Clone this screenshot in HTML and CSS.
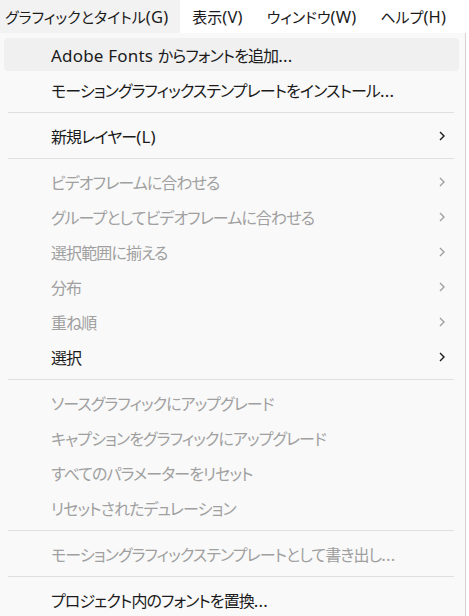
FILE: index.html
```html
<!DOCTYPE html>
<html lang="ja">
<head>
<meta charset="utf-8">
<link rel="stylesheet" href="styles.css">
</head>
<body>
<div class="menubar">
  <div class="mb-item active">グラフィックとタイトル<span class="lat">(G)</span></div>
  <div class="mb-item">表示<span class="lat">(V)</span></div>
  <div class="mb-item">ウィンドウ<span class="lat">(W)</span></div>
  <div class="mb-item">ヘルプ<span class="lat">(H)</span></div>
</div>
<div class="dropdown">
  <div class="item hover"><span class="label"><span class="lat">Adobe Fonts </span>からフォントを追加<span class="lat">...</span></span></div>
  <div class="item"><span class="label">モーショングラフィックステンプレートをインストール<span class="lat">...</span></span></div>
  <div class="sep"></div>
  <div class="item"><span class="label">新規レイヤー<span class="lat">(L)</span></span><svg class="chev" viewBox="0 0 6 10"><path d="M1 1 L5 5 L1 9"/></svg></div>
  <div class="sep"></div>
  <div class="item disabled"><span class="label">ビデオフレームに合わせる</span><svg class="chev" viewBox="0 0 6 10"><path d="M1 1 L5 5 L1 9"/></svg></div>
  <div class="item disabled"><span class="label">グループとしてビデオフレームに合わせる</span><svg class="chev" viewBox="0 0 6 10"><path d="M1 1 L5 5 L1 9"/></svg></div>
  <div class="item disabled"><span class="label">選択範囲に揃える</span><svg class="chev" viewBox="0 0 6 10"><path d="M1 1 L5 5 L1 9"/></svg></div>
  <div class="item disabled"><span class="label">分布</span><svg class="chev" viewBox="0 0 6 10"><path d="M1 1 L5 5 L1 9"/></svg></div>
  <div class="item disabled"><span class="label">重ね順</span><svg class="chev" viewBox="0 0 6 10"><path d="M1 1 L5 5 L1 9"/></svg></div>
  <div class="item"><span class="label">選択</span><svg class="chev" viewBox="0 0 6 10"><path d="M1 1 L5 5 L1 9"/></svg></div>
  <div class="sep"></div>
  <div class="item disabled"><span class="label">ソースグラフィックにアップグレード</span></div>
  <div class="item disabled"><span class="label">キャプションをグラフィックにアップグレード</span></div>
  <div class="item disabled"><span class="label">すべてのパラメーターをリセット</span></div>
  <div class="item disabled"><span class="label">リセットされたデュレーション</span></div>
  <div class="sep"></div>
  <div class="item disabled"><span class="label">モーショングラフィックステンプレートとして書き出し<span class="lat">...</span></span></div>
  <div class="sep"></div>
  <div class="item"><span class="label">プロジェクト内のフォントを置換<span class="lat">...</span></span></div>
</div>
</body>
</html>
```

FILE: styles.css
```css
html, body {
  margin: 0;
  padding: 0;
  background: #ffffff;
  overflow: hidden;
}
body {
  width: 469px;
  height: 616px;
  font-family: "Noto Sans", "Noto Sans CJK JP", sans-serif;
  color: #1b1b1b;
  font-feature-settings: "palt";
}
.menubar {
  display: flex;
  height: 33px;
  background: #ffffff;
  font-size: 15px;
}
.menubar .lat {
  font-size: 16.5px;
  letter-spacing: 0.2px;
}
.mb-item {
  display: flex;
  align-items: center;
  padding: 0 12px;
  height: 33px;
  white-space: nowrap;
}
.mb-item.active {
  background: #f2f2f2;
  padding-left: 5px;
}
.dropdown {
  width: 466px;
  height: 583px;
  background: #f9f9f9;
  border-right: 1px solid #d4d4d4;
  padding-top: 4px;
  box-sizing: border-box;
  display: flex;
  flex-direction: column;
}
.item {
  height: 35px;
  flex: none;
  display: flex;
  align-items: center;
  padding: 1px 0 0 51px;
  box-sizing: border-box;
  margin: 0 6px 0 0;
  font-size: 16px;
  white-space: nowrap;
  border-radius: 4px;
}
.item.hover {
  background: #f0f0f0;
  margin-left: 4px;
  padding-left: 47px;
  height: 33px;
  margin-top: 1px;
  margin-bottom: 1px;
}
.item.disabled {
  color: #a0a0a0;
}
.label {
  flex: 1;
  letter-spacing: -0.9px;
}
.label .lat {
  font-size: 17px;
  letter-spacing: 0.2px;
}
.chev {
  width: 6px;
  height: 10px;
  margin-right: 14px;
  fill: none;
  stroke: #1b1b1b;
  stroke-width: 1.4;
}
.item.disabled .chev {
  stroke: #a0a0a0;
}
.sep {
  flex: none;
  height: 1px;
  background: #e0e0e0;
  margin: 5px 11px 5px 8px;
}
```
